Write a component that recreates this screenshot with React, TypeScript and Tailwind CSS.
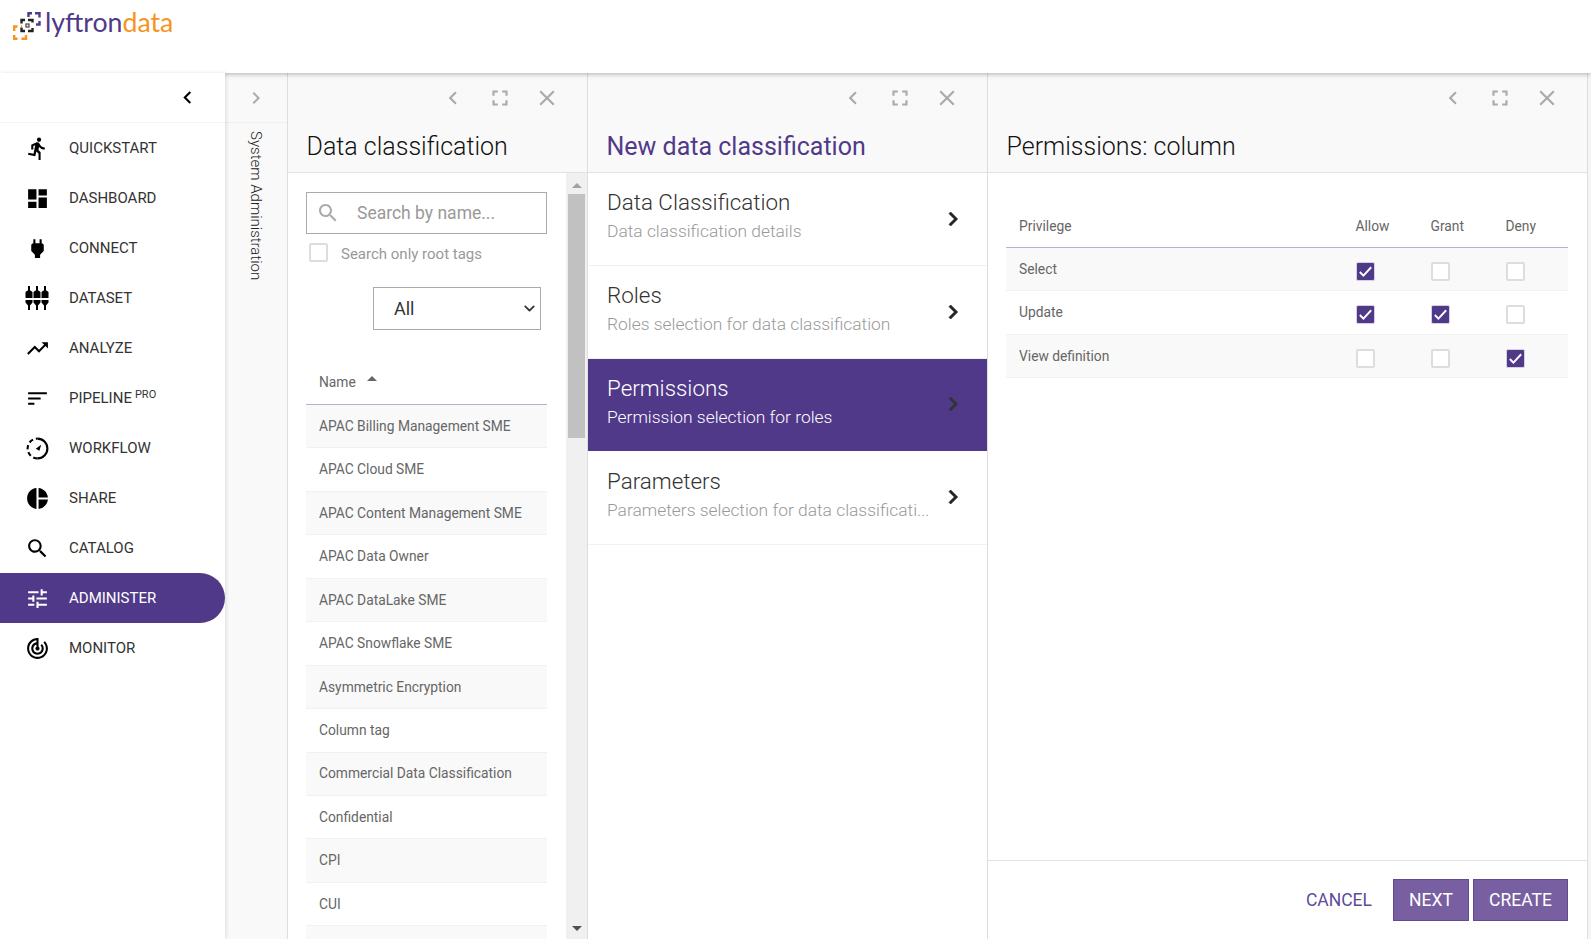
import { ChevronDown } from "lucide-react";

const menuItems = [
  { label: "QUICKSTART", icon: "run" },
  { label: "DASHBOARD", icon: "dashboard" },
  { label: "CONNECT", icon: "plug" },
  { label: "DATASET", icon: "dataset" },
  { label: "ANALYZE", icon: "trend" },
  { label: "PIPELINE", icon: "sort", pro: true },
  { label: "WORKFLOW", icon: "workflow" },
  { label: "SHARE", icon: "pie" },
  { label: "CATALOG", icon: "search" },
  { label: "ADMINISTER", icon: "tune", active: true },
  { label: "MONITOR", icon: "radar" },
];

const tags = [
  "APAC Billing Management SME",
  "APAC Cloud SME",
  "APAC Content Management SME",
  "APAC Data Owner",
  "APAC DataLake SME",
  "APAC Snowflake SME",
  "Asymmetric Encryption",
  "Column tag",
  "Commercial Data Classification",
  "Confidential",
  "CPI",
  "CUI",
  "",
];

const steps = [
  { title: "Data Classification", sub: "Data classification details" },
  { title: "Roles", sub: "Roles selection for data classification" },
  { title: "Permissions", sub: "Permission selection for roles", active: true },
  { title: "Parameters", sub: "Parameters selection for data classificati...", last: true },
];

const privileges = [
  { name: "Select", checks: [true, false, false] },
  { name: "Update", checks: [true, true, false] },
  { name: "View definition", checks: [false, false, true] },
];

const paths: Record<string, string> = {
  run: "M13.49 5.48c1.1 0 2-.9 2-2s-.9-2-2-2-2 .9-2 2 .9 2 2 2zm-3.6 13.9l1-4.4 2.1 2v6h2v-7.5l-2.1-2 .6-3c1.3 1.5 3.3 2.5 5.5 2.5v-2c-1.9 0-3.5-1-4.3-2.4l-1-1.6c-.4-.6-1-1-1.7-1-.3 0-.5.1-.8.1l-5.2 2.2v4.7h2v-3.4l1.8-.7-1.6 8.1-4.9-1-.4 2 7 1.4z",
  dashboard: "M3 13h8V3H3v10zm0 8h8v-6H3v6zm10 0h8V11h-8v10zm0-18v6h8V3h-8z",
  plug: "M16.01 7L16 3h-2v4h-4V3H8v4h-.01C7 6.99 6 7.99 6 8.99v5.49L9.5 18v3h5v-3l3.5-3.51v-5.5c0-1-1-2-1.99-1.99z",
  trend: "M16 6l2.29 2.29-4.88 4.88-4-4L2 16.59 3.41 18l6-6 4 4 6.3-6.29L22 12V6z",
  sort: "M3 18h6v-2H3v2zM3 6v2h18V6H3zm0 7h12v-2H3v2z",
  pie: "M11 2v20c-5.07-.5-9-4.79-9-10s3.93-9.5 9-10zm2.03 0v8.99H22c-.47-4.74-4.24-8.52-8.97-8.99zm0 11.01V22c4.74-.47 8.5-4.25 8.97-8.99h-8.97z",
  search: "M15.5 14h-.79l-.28-.27C15.41 12.59 16 11.11 16 9.5 16 5.91 13.09 3 9.5 3S3 5.91 3 9.5 5.91 16 9.5 16c1.61 0 3.09-.59 4.23-1.57l.27.28v.79l5 4.99L20.49 19l-4.99-5zm-6 0C7.01 14 5 11.99 5 9.5S7.01 5 9.5 5 14 7.01 14 9.5 11.99 14 9.5 14z",
  tune: "M3 17v2h6v-2H3zM3 5v2h10V5H3zm10 16v-2h8v-2h-8v-2h-2v6h2zM7 9v2H3v2h4v2h2V9H7zm14 4v-2H11v2h10zm-6-4h2V7h4V5h-4V3h-2v6z",
  radar: "M19.07 4.93l-1.41 1.41C19.1 7.79 20 9.79 20 12c0 4.42-3.58 8-8 8s-8-3.58-8-8c0-4.08 3.05-7.44 7-7.93v2.02C8.16 6.57 6 9.03 6 12c0 3.31 2.69 6 6 6s6-2.69 6-6c0-1.66-.67-3.16-1.76-4.24l-1.41 1.41C15.55 9.9 16 10.9 16 12c0 2.21-1.79 4-4 4s-4-1.79-4-4c0-1.86 1.28-3.41 3-3.86v2.14c-.6.35-1 .98-1 1.72 0 1.1.9 2 2 2s2-.9 2-2c0-.74-.4-1.38-1-1.72V2h-1C6.48 2 2 6.48 2 12s4.48 10 10 10 10-4.48 10-10c0-2.76-1.12-5.26-2.93-7.07z",
  left: "M15.41 7.41L14 6l-6 6 6 6 1.41-1.41L10.83 12z",
  right: "M8.59 16.59L10 18l6-6-6-6-1.41 1.41L13.17 12z",
  full: "M7 14H5v5h5v-2H7v-3zm-2-4h2V7h3V5H5v5zm12 7h-3v2h5v-5h-2v3zM14 5v2h3v3h2V5h-5z",
  close: "M19 6.41L17.59 5 12 10.59 6.41 5 5 6.41 10.59 12 5 17.59 6.41 19 12 13.41 17.59 19 19 17.59 13.41 12z",
};

const MdIcon = ({ name, className }: { name: string; className?: string }) => (
  <svg viewBox="0 0 24 24" fill="currentColor" className={className}>
    <path d={paths[name]} />
  </svg>
);

const DatasetIcon = () => (
  <svg viewBox="0 0 24 24" fill="currentColor" className="w-[24px] h-[24px]">
    {[4, 12, 20].map((x) => (
      <g key={x}>
        <rect x={x - 1} y="0" width="2" height="5" />
        <path d={`M${x - 3.5} 6l2 -1.5h3l2 1.5v6h-7z`} />
        <path d={`M${x - 3.5} 14h7v2.5l-2.5 3v4.5h-2v-4.5l-2.5 -3z`} />
      </g>
    ))}
  </svg>
);

const WorkflowIcon = () => (
  <svg viewBox="0 0 24 24" fill="none" className="w-[25px] h-[25px]">
    <path d="M12 2.5a9.5 9.5 0 0 1 0 19" stroke="currentColor" strokeWidth="2" />
    <path d="M12 21.5a9.5 9.5 0 0 1 0 -19" stroke="currentColor" strokeWidth="2" strokeDasharray="4.2 2.8" />
    <path d="M15.5 8.5l-1.6 5.6-3.6-1.8z" fill="currentColor" />
  </svg>
);

const MenuIcon = ({ name }: { name: string }) => {
  if (name === "dataset") return <DatasetIcon />;
  if (name === "workflow") return <WorkflowIcon />;
  return <MdIcon name={name} className="w-[25px] h-[25px]" />;
};

const Logo = () => (
  <svg viewBox="0 0 30 28" fill="none" strokeWidth="2.4" className="w-[30px] h-[28px]">
    <g stroke="#51398a">
      <path d="M15.500 5V1.200h3.500M22 1.200h4.500v4.300M26.500 9v3.500H23" />
    </g>
    <g stroke="#222">
      <path d="M8.500 11.500V8h3.500M15 8h4.500v2.500M8.500 15.500V19h3.500M15 19h4.500v-3" />
    </g>
    <rect x="13" y="12" width="3" height="3" stroke="#444" strokeWidth="1.2" />
    <g stroke="#f7941e">
      <path d="M1.200 19v-4.500h3.300M8 14.500h1M1.200 23v3.800h3.300M8.500 26.800h4.500v-3.800" />
    </g>
  </svg>
);

const Check = ({ on }: { on: boolean }) =>
  on ? (
    <span className="flex items-center justify-center w-[19px] h-[19px] mt-[4px] rounded-[2px] bg-[#51398a] border border-[#d5cfe3]">
      <svg viewBox="0 0 18 18" className="w-[17px] h-[17px]" fill="none" stroke="white" strokeWidth="2">
        <path d="M3 9.500l3.800 3.800L15 4.500" />
      </svg>
    </span>
  ) : (
    <span className="block w-[19px] h-[19px] mt-[4px] rounded-[2px] bg-white border-2 border-[#dddddd]" />
  );

const PanelHeader = ({ title, accent }: { title: string; accent?: boolean }) => (
  <div className="h-[100px] shrink-0 bg-[#f9f9f9] border-b border-[#e2e2e2]">
    <div className="flex justify-end gap-[21px] pr-[27px] pt-[12px] text-[#aaaaaa]">
      <MdIcon name="left" className="w-[26px] h-[26px]" />
      <MdIcon name="full" className="w-[26px] h-[26px]" />
      <MdIcon name="close" className="w-[26px] h-[26px]" />
    </div>
    <h2
      className={
        accent
          ? "pl-[18.5px] mt-[20px] text-[25px] leading-[32px] font-normal text-[#51398a]"
          : "pl-[18.5px] mt-[20px] text-[25px] leading-[32px] font-light text-[#111111]"
      }
    >
      {title}
    </h2>
  </div>
);

export default function App() {
  return (
    <div className="flex flex-col h-[939px] overflow-hidden bg-white font-['Roboto',sans-serif]">
      <header className="h-[73px] shrink-0 bg-white flex items-start pl-[13px] pt-[12px] gap-[2px] relative z-10 shadow-[0_1px_5px_rgba(0,0,0,0.3)]">
        <Logo />
        <div className="font-['Lato',sans-serif] text-[26.7px] leading-[21px] text-[#51398a]">
          lyftron<span className="text-[#f7941e]">data</span>
        </div>
      </header>

      <div className="flex flex-1 min-h-0">
        <aside className="w-[225px] shrink-0 bg-white relative z-20 shadow-[1px_0_4px_rgba(0,0,0,0.12)]">
          <div className="h-[50px] border-b border-[#f3f3f3] flex items-center justify-end pr-[25px] text-black">
            <MdIcon name="left" className="w-[25px] h-[25px]" />
          </div>
          {menuItems.map((item) => (
            <div
              key={item.label}
              className={
                item.active
                  ? "h-[50px] flex items-center bg-[#51398a] text-white rounded-r-full"
                  : "h-[50px] flex items-center text-[#333333]"
              }
            >
              <span className={item.active ? "w-[69px] pl-[25px] flex justify-start" : "w-[69px] pl-[25px] flex justify-start text-black"}>
                <MenuIcon name={item.icon} />
              </span>
              <span className="text-[15px] pt-[1px]">{item.label}</span>
              {item.pro && <sup className="text-[11px] ml-[3px] mt-[4px]">PRO</sup>}
            </div>
          ))}
        </aside>

        <div className="w-[63px] shrink-0 bg-[#f9f9f9] border-r border-[#dedede]">
          <div className="h-[50px] border-b border-[#f0f0f0] flex items-center justify-center text-[#aaaaaa]">
            <MdIcon name="right" className="w-[24px] h-[24px]" />
          </div>
          <div className="flex justify-center pt-[8px]">
            <span className="[writing-mode:vertical-rl] text-[15px] font-light text-[#222222]">System Administration</span>
          </div>
        </div>

        <section className="w-[300px] shrink-0 flex flex-col border-r border-[#dedede]">
          <PanelHeader title="Data classification" />
          <div className="flex flex-1 min-h-0">
            <div className="flex-1 min-w-0 pl-[18px] pr-[19px] pt-[19px] overflow-hidden">
              <div className="h-[42px] border border-[#aaaaaa] flex items-center pl-[9px]">
                <MdIcon name="search" className="w-[24px] h-[24px] text-[#aaaaaa]" />
                <span className="ml-[17px] pt-[1px] text-[17.5px] text-[#999999]">Search by name...</span>
              </div>
              <div className="flex items-center mt-[9px] pl-[3px] h-[19px]">
                <span className="block w-[19px] h-[19px] rounded-[2px] border-2 border-[#dddddd]" />
                <span className="ml-[13px] pt-[3px] text-[15px] text-[#999999]">Search only root tags</span>
              </div>
              <div className="mt-[25px] ml-[67px] w-[168px] relative">
                <select className="block w-[168px] h-[43px] pl-[20px] appearance-none bg-white border border-[#aaaaaa] text-[18px] text-[#333333]">
                  <option>All</option>
                </select>
                <ChevronDown size={17} strokeWidth={2.5} className="absolute right-[3px] top-[13px] text-[#333333]" />
              </div>
              <div className="mt-[31px] h-[44px] flex items-center pl-[13px] pb-[1px] border-b border-[#b7b0d0] text-[13.8px] text-[#666666]">
                <span>Name</span>
                <span className="ml-[11px] mb-[7px] w-0 h-0 border-l-[5px] border-r-[5px] border-b-[5px] border-l-transparent border-r-transparent border-b-[#666666]" />
              </div>
              {tags.map((t, i) => (
                <div
                  key={i}
                  className={
                    i % 2 === 0
                      ? "h-[43.45px] flex items-center pl-[13px] bg-[#f9f9f9] border-b border-[#f1f1f1] text-[13.8px] text-[#666666]"
                      : "h-[43.45px] flex items-center pl-[13px] bg-white border-b border-[#f1f1f1] text-[13.8px] text-[#666666]"
                  }
                >
                  {t}
                </div>
              ))}
            </div>
            <div className="w-[21px] shrink-0 bg-[#f0f0f0] flex flex-col items-center">
              <span className="mt-[10px] w-0 h-0 border-l-[5px] border-r-[5px] border-b-[5px] border-l-transparent border-r-transparent border-b-[#a3a3a3]" />
              <span className="mt-[6px] w-[17px] h-[244px] bg-[#c1c1c1]" />
              <span className="mt-auto mb-[8px] w-0 h-0 border-l-[5px] border-r-[5px] border-t-[5px] border-l-transparent border-r-transparent border-t-[#505050]" />
            </div>
          </div>
        </section>

        <section className="w-[400px] shrink-0 flex flex-col border-r border-[#dedede]">
          <PanelHeader title="New data classification" accent />
          {steps.map((s) => (
            <div
              key={s.title}
              className={
                s.active
                  ? "h-[92px] flex items-center pl-[19px] pr-[20px] bg-[#51398a]"
                  : s.last
                    ? "h-[94px] flex items-center pl-[19px] pr-[20px] border-b border-[#f1f1f1]"
                    : "h-[93px] flex items-center pl-[19px] pr-[20px] border-b border-[#f1f1f1]"
              }
            >
              <div className="flex-1 min-w-0 pb-[8px]">
                <div className={s.active ? "text-[22.4px] leading-[30px] font-light text-white" : "text-[22.4px] leading-[30px] font-light text-[#333333]"}>
                  {s.title}
                </div>
                <div className={s.active ? "mt-[2px] text-[17.4px] leading-[24px] font-light whitespace-nowrap text-white" : "mt-[2px] text-[17.4px] leading-[24px] font-light whitespace-nowrap text-[#999999]"}>
                  {s.sub}
                </div>
              </div>
              <svg viewBox="0 0 24 24" fill="currentColor" stroke="currentColor" strokeWidth="0.6" className={s.active ? "w-[28px] h-[28px] -mt-[2px] shrink-0 text-[#333333]" : "w-[28px] h-[28px] -mt-[1px] shrink-0 text-[#222222]"}>
                <path d={paths.right} />
              </svg>
            </div>
          ))}
        </section>

        <section className="w-[600px] shrink-0 flex flex-col border-r border-[#dedede]">
          <PanelHeader title="Permissions: column" />
          <div className="flex-1 min-h-0 pl-[18px] pr-[19px] pt-[32px]">
            <div className="grid grid-cols-[349.5px_75px_75px_1fr] h-[43px] items-center border-b border-[#b7b0d0] text-[13.8px] text-[#666666]">
              <span className="pl-[13px]">Privilege</span>
              <span>Allow</span>
              <span>Grant</span>
              <span>Deny</span>
            </div>
            {privileges.map((p, i) => (
              <div
                key={p.name}
                className={
                  i % 2 === 0
                    ? "grid grid-cols-[349.5px_75px_75px_1fr] h-[43.45px] items-center bg-[#f9f9f9] border-b border-[#f1f1f1] text-[13.8px] text-[#666666]"
                    : "grid grid-cols-[349.5px_75px_75px_1fr] h-[43.45px] items-center bg-white border-b border-[#f1f1f1] text-[13.8px] text-[#666666]"
                }
              >
                <span className="pl-[13px]">{p.name}</span>
                {p.checks.map((on, j) => (
                  <span key={j}>
                    <Check on={on} />
                  </span>
                ))}
              </div>
            ))}
          </div>
          <div className="h-[79px] shrink-0 border-t border-[#e2e2e2] flex justify-end items-start gap-[4px] pt-[18px] pr-[19px]">
            <span className="mr-[17px] leading-[42px] text-[17.5px] text-[#5f4b9b]">CANCEL</span>
            <span className="w-[76px] h-[42px] flex items-center justify-center bg-[#775fa1] border border-[#634a90] text-[17.5px] text-white">NEXT</span>
            <span className="w-[95px] h-[42px] flex items-center justify-center bg-[#775fa1] border border-[#634a90] text-[17.5px] text-white">CREATE</span>
          </div>
        </section>

        <div className="flex-1 bg-[#f5f5f5]" />
      </div>
    </div>
  );
}
